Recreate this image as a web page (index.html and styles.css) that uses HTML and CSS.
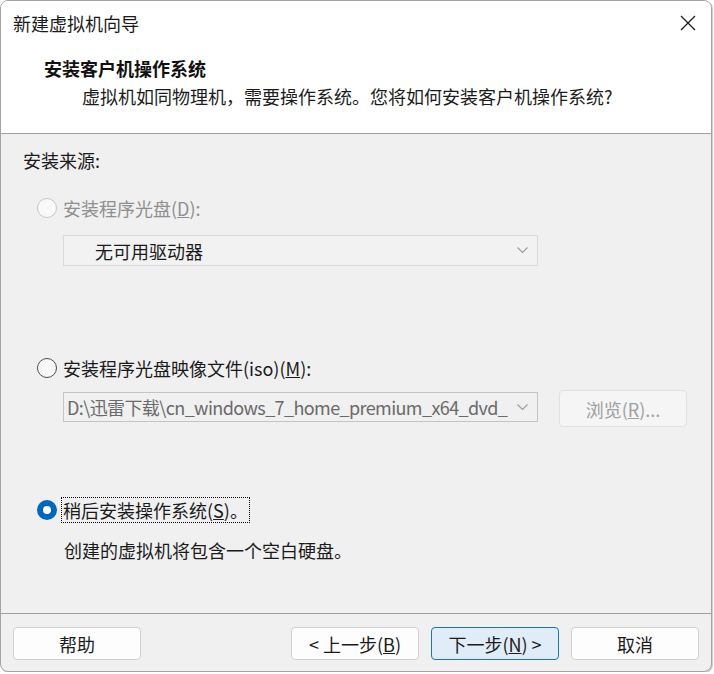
FILE: index.html
```html
<!DOCTYPE html>
<html lang="zh-CN">
<head>
<meta charset="utf-8">
<title>新建虚拟机向导</title>
<link rel="stylesheet" href="styles.css">
</head>
<body>
<div class="window">
  <div class="titlebar">
    <span class="title">新建虚拟机向导</span>
    <svg class="close" width="16" height="16" viewBox="0 0 16 16"><path d="M1 1 L15 15 M15 1 L1 15" stroke="#1a1a1a" stroke-width="1.3" fill="none"/></svg>
  </div>
  <div class="header">
    <div class="heading">安装客户机操作系统</div>
    <div class="subtitle">虚拟机如同物理机，需要操作系统。您将如何安装客户机操作系统?</div>
  </div>
  <div class="content">
    <div class="section-label">安装来源:</div>

    <div class="radio-row disabled r1">
      <span class="radio"></span>
      <span class="label">安装程序光盘(<u>D</u>):</span>
    </div>
    <div class="combo combo-disabled c1">
      <span class="combo-text">无可用驱动器</span>
      <svg class="chev" width="11" height="7" viewBox="0 0 11 7"><path d="M0.5 0.5 L5.5 5.5 L10.5 0.5" stroke="#9a9a9a" stroke-width="1.1" fill="none"/></svg>
    </div>

    <div class="radio-row r2">
      <span class="radio"></span>
      <span class="label">安装程序光盘映像文件(iso)(<u>M</u>):</span>
    </div>
    <div class="iso-row">
      <div class="combo c2">
        <span class="combo-text">D:\迅雷下载\cn_windows_7_home_premium_x64_dvd_</span>
        <svg class="chev" width="11" height="7" viewBox="0 0 11 7"><path d="M0.5 0.5 L5.5 5.5 L10.5 0.5" stroke="#9a9a9a" stroke-width="1.1" fill="none"/></svg>
      </div>
      <div class="browse">浏览(<u>R</u>)...</div>
    </div>

    <div class="radio-row r3">
      <span class="radio checked"></span>
      <span class="label focus">稍后安装操作系统(<u>S</u>)。</span>
    </div>
    <div class="desc">创建的虚拟机将包含一个空白硬盘。</div>
  </div>
  <div class="footer">
    <div class="btn">帮助</div>
    <div class="btn push">&lt; 上一步(<u>B</u>)</div>
    <div class="btn primary">下一步(<u>N</u>) &gt;</div>
    <div class="btn">取消</div>
  </div>
</div>
</body>
</html>
```

FILE: styles.css
```css
* { box-sizing: border-box; }
html, body { margin: 0; padding: 0; background: #ffffff; }
body {
  font-family: "Noto Sans CJK SC", "Noto Sans", sans-serif;
  font-size: 18px;
  color: #1b1b1b;
}
.window {
  width: 712px;
  height: 672px;
  border: 1px solid #a3a3a3;
  border-radius: 8px;
  overflow: hidden;
  display: flex;
  flex-direction: column;
  background: #f0f0f0;
  box-shadow: 1px 1px 0 #cfcfcf;
}
.titlebar {
  height: 43px;
  flex: none;
  background: #ffffff;
  display: flex;
  align-items: center;
  justify-content: space-between;
  padding: 0 15px 0 12px;
}
.title { line-height: 24px; color: #1a1a1a; }
.close { display: block; }
.header {
  flex: none;
  height: 90px;
  background: #ffffff;
  border-bottom: 1px solid #a0a0a0;
  padding-top: 12px;
}
.heading {
  font-weight: bold;
  line-height: 24px;
  padding-left: 43px;
  color: #111;
}
.subtitle {
  line-height: 24px;
  margin-top: 4px;
  padding-left: 81px;
  color: #1b1b1b;
}
.content {
  flex: 1;
  display: flex;
  flex-direction: column;
  padding: 14px 0 0 22px;
}
.section-label { line-height: 24px; }
.radio-row {
  display: flex;
  align-items: center;
  height: 26px;
  margin-left: 14px;
  gap: 4px;
}
.r1 { margin-top: 23px; }
.r2 { margin-top: 89px; }
.r3 { margin-top: 70px; }
.radio {
  width: 20px;
  height: 20px;
  border-radius: 50%;
  border: 1px solid #4d4d4d;
  background: #f7f7f7;
  flex: none;
}
.disabled .radio { border-color: #c6c6c6; background: #f9f9f9; }
.disabled .label { color: #8f8f8f; }
.radio.checked {
  border: 6px solid #0067c0;
  background: #ffffff;
}
.label {
  line-height: 24px;
  border: 1px dotted transparent;
  padding: 0 1px;
}
.label.focus { border-color: #000; }
.combo {
  width: 475px;
  height: 31px;
  border: 1px solid #d9d9d9;
  background: #f2f2f2;
  display: flex;
  align-items: center;
  justify-content: space-between;
  overflow: hidden;
}
.c1 { margin: 14px 0 0 40px; padding: 0 9px 0 31px; }
.combo-text { white-space: nowrap; overflow: hidden; line-height: 24px; }
.c1 .combo-text { color: #1b1b1b; }
.iso-row {
  display: flex;
  align-items: flex-start;
  margin: 9px 0 0 40px;
  gap: 21px;
}
.c2 {
  height: 30px;
  margin-top: 2px;
  border-color: #c4c4c4;
  background: #f0f0f0;
  padding: 0 9px 0 3px;
}
.c2 .combo-text {
  color: #6a6a6a;
  letter-spacing: -0.6px;
  flex: 1;
  min-width: 0;
  margin-right: 8px;
}
.chev { flex: none; display: block; }
.browse {
  width: 128px;
  height: 37px;
  border: 1px solid #e0e0e0;
  border-radius: 4px;
  background: #f5f5f5;
  color: #a0a0a0;
  display: flex;
  align-items: center;
  justify-content: center;
  white-space: nowrap;
}
.desc {
  margin: 15px 0 0 41px;
  line-height: 24px;
}
.footer {
  flex: none;
  height: 58px;
  border-top: 1px solid #a0a0a0;
  display: flex;
  align-items: flex-start;
  gap: 12px;
  padding: 13px 12px 0 12px;
}
.btn {
  width: 128px;
  height: 33px;
  border: 1px solid #d0d0d0;
  border-radius: 4px;
  background: #fdfdfd;
  display: flex;
  align-items: center;
  justify-content: center;
  color: #1b1b1b;
  line-height: 24px;
  white-space: pre;
}
.btn.push { margin-left: auto; }
.btn.primary {
  background: #e0ecf7;
  border-color: #1a74c6;
}
```
